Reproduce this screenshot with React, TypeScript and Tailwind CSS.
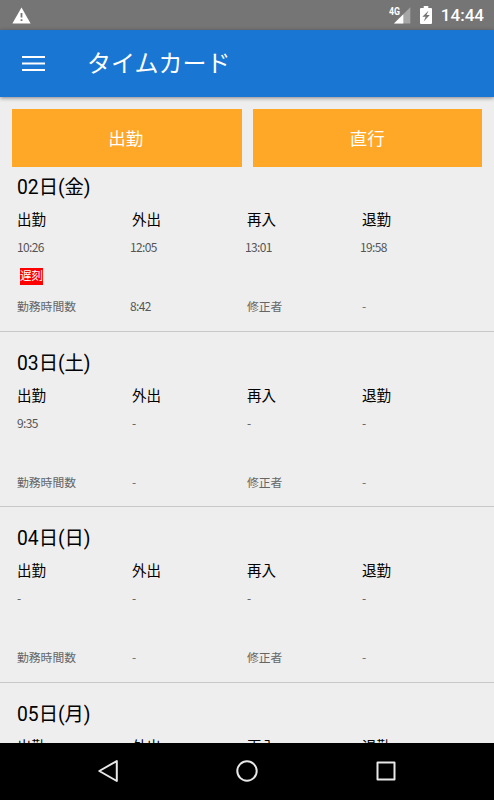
import React from 'react';

interface WorkDay {
    date: string;
    times: string[];
    late?: boolean;
    total: string;
    editor: string;
}

const LABELS = ['出勤', '外出', '再入', '退勤'];

const DAYS: WorkDay[] = [
    { date: '02日(金)', times: ['10:26', '12:05', '13:01', '19:58'], late: true, total: '8:42', editor: '-' },
    { date: '03日(土)', times: ['9:35', '-', '-', '-'], total: '-', editor: '-' },
    { date: '04日(日)', times: ['-', '-', '-', '-'], total: '-', editor: '-' },
    { date: '05日(月)', times: ['-', '-', '-', '-'], total: '-', editor: '-' },
];

const StatusBar: React.FC = () => (
    <div className="flex h-[30px] shrink-0 items-center justify-between bg-[#757575] pl-3 pr-[10px] text-white">
        <svg width="19" height="17" viewBox="0 0 19 17">
            <path d="M9.5 .5 18.6 16.4H.4Z" fill="currentColor" />
            <path d="M8.6 6h1.8v4.6H8.6zM8.6 12.2h1.8V14H8.6z" fill="#757575" />
        </svg>
        <div className="flex items-center">
            <svg width="22" height="18" viewBox="0 0 22 18" className="mr-[9px]">
                <text x="0" y="8.5" fontSize="10" fontWeight="700" fill="currentColor" textLength="11" lengthAdjust="spacingAndGlyphs">4G</text>
                <path d="M21.3 1.2V17.5H5Z" fill="#a6a6a6" />
                <path d="M14.3 8.2V17.5H5Z" fill="currentColor" />
            </svg>
            <svg width="12" height="18" viewBox="0 0 12 18" className="mr-[9px]">
                <path d="M3.7 0h4.6v2H11q1 0 1 1v14q0 1-1 1H1q-1 0-1-1V3q0-1 1-1h2.7z" fill="currentColor" />
                <path d="M8.5 4.8 2.3 10.8H5.7L3.7 15.5 9.8 9H6.5z" fill="#757575" />
            </svg>
            <span className="text-[17px] font-medium leading-[30px]">14:44</span>
        </div>
    </div>
);

const Value: React.FC<{ text: string }> = ({ text }) => (
    <span className={text === '-' ? '' : 'tracking-[-0.65px]'}>{text}</span>
);

const DayCard: React.FC<{ day: WorkDay }> = ({ day }) => (
    <div className="h-[175.6px] shrink-0 border-b border-[#c8c8c8] pl-[17px] pt-[19px]">
        <div className="h-[26px] text-[19.3px] leading-[26px] text-black">{day.date}</div>
        <div className="mt-[9px] grid h-[22px] grid-cols-[115px_115px_115px_115px] text-[14.5px] leading-[22px] text-black">
            {LABELS.map(label => <span key={label}>{label}</span>)}
        </div>
        <div className="mt-[6px] grid h-[18px] grid-cols-[113px_115px_115px_115px] font-['Noto_Sans_CJK_JP',sans-serif] text-[12px] leading-[18px] text-[#555]">
            {day.times.map((time, i) => (
                <span key={i} className={time === '-' && i > 0 ? 'pl-[2px]' : ''}>
                    <Value text={time} />
                </span>
            ))}
        </div>
        <div className="mt-[12px] h-[17px] pl-[3px]">
            {day.late && (
                <span className="block h-[17px] w-[23px] bg-[#f00] text-[11.5px] leading-[17px] text-white">遅刻</span>
            )}
        </div>
        <div className="mt-[12px] grid h-[18px] grid-cols-[113px_117px_115px_115px] font-['Noto_Sans_CJK_JP',sans-serif] text-[12px] leading-[18px] text-[#666]">
            <span className="text-[11.8px]">勤務時間数</span>
            <span className={day.total === '-' ? 'pl-[2px]' : 'text-[#555]'}>
                <Value text={day.total} />
            </span>
            <span className="text-[11.8px]">修正者</span>
            <Value text={day.editor} />
        </div>
    </div>
);

export default function App() {
    return (
        <div className="flex h-[800px] w-[494px] flex-col overflow-hidden bg-[#eee] font-['Roboto','Noto_Sans_CJK_JP',sans-serif]">
            <StatusBar />
            <header className="z-10 flex h-[67px] shrink-0 items-center bg-[#1976d2] pl-[22px] text-white shadow-[0_1px_4px_rgba(0,0,0,0.45)]">
                <svg width="23" height="17" viewBox="0 0 23 17" className="mr-[42px]">
                    <path d="M0 2h23M0 8.5h23M0 15h23" stroke="currentColor" strokeWidth="2.2" />
                </svg>
                <h1 className="text-[24px] leading-[32px]">タイムカード</h1>
            </header>

            <main className="flex min-h-0 flex-1 flex-col overflow-hidden">
                <div className="mt-[12px] grid h-[58px] shrink-0 grid-cols-2 gap-[11px] px-3 text-[17.5px] text-white">
                    <button className="bg-[#ffa726] pr-[2px] pt-[2px]">出勤</button>
                    <button className="bg-[#ffa726] pt-[2px]">直行</button>
                </div>
                <div className="-mt-[11px] flex flex-col">
                    {DAYS.map(day => <DayCard key={day.date} day={day} />)}
                </div>
            </main>

            <nav className="flex h-[57px] shrink-0 items-center justify-between bg-black pb-[1px] pl-[97px] pr-[98px] text-[#e8e8e8]">
                <svg width="21" height="24" viewBox="0 0 21 24" fill="none" stroke="currentColor" strokeWidth="2" strokeLinejoin="round">
                    <path d="M19.8 2V22L2.3 12Z" />
                </svg>
                <svg width="22" height="22" viewBox="0 0 22 22" fill="none" stroke="currentColor" strokeWidth="2">
                    <circle cx="11" cy="11" r="9.7" />
                </svg>
                <svg width="20" height="20" viewBox="0 0 20 20" fill="none" stroke="currentColor" strokeWidth="2" strokeLinejoin="round">
                    <rect x="1.5" y="1.5" width="17" height="17" />
                </svg>
            </nav>
        </div>
    );
}
